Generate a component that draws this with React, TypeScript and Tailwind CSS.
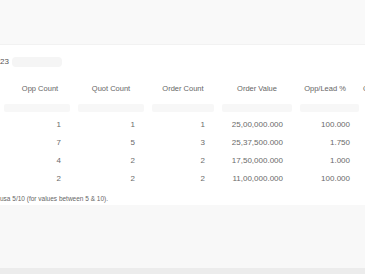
import React from "react";

// Filas de la tabla
const rows = [
  { opp: "1", quot: "1", order: "1", value: "25,00,000.000", pct: "100.000" },
  { opp: "7", quot: "5", order: "3", value: "25,37,500.000", pct: "1.750" },
  { opp: "4", quot: "2", order: "2", value: "17,50,000.000", pct: "1.000" },
  { opp: "2", quot: "2", order: "2", value: "11,00,000.000", pct: "100.000" },
];

const cols = ["w-[74px]", "w-[74px]", "w-[70px]", "w-[78px]", "w-[67px]"];

export default function App() {
  return (
    <div
      className="w-[365px] h-[274px] overflow-hidden bg-[#f8f8f8] flex flex-col text-[#666]"
      style={{ fontFamily: '"Liberation Sans", Arial, sans-serif' }}
    >
      {/* Fondo superior */}
      <div className="h-[45px] shrink-0 bg-[#f9f9f9] border-b border-[#f2f2f2]" />

      {/* Tarjeta */}
      <div className="h-[160px] shrink-0 bg-white flex flex-col">
        <div className="h-[22px] mt-[6px] flex items-center gap-[3px]">
          <span className="text-[8px] leading-none text-[#555]">23</span>
          <div className="w-[50px] h-[10px] bg-[#f5f5f5] rounded-sm" />
        </div>

        {/* Encabezado */}
        <div className="flex items-center h-[22px] mt-[5px] text-[7.5px] whitespace-nowrap">
          <div className={`${cols[0]} shrink-0 text-center pl-[6px]`}>Opp Count</div>
          <div className={`${cols[1]} shrink-0 text-center`}>Quot Count</div>
          <div className={`${cols[2]} shrink-0 text-center`}>Order Count</div>
          <div className={`${cols[3]} shrink-0 text-center`}>Order Value</div>
          <div className={`${cols[4]} shrink-0 text-center pr-[9px]`}>Opp/Lead %</div>
          <div className="shrink-0">Order %</div>
        </div>

        {/* Fila de filtros */}
        <div className="flex items-center h-[9px] mt-[3px]">
          {cols.map((c, i) => (
            <div key={i} className={`${c} shrink-0 px-[4px]`}>
              <div className="h-[8px] bg-[#f7f7f7] rounded-[2px]" />
            </div>
          ))}
        </div>

        {/* Datos */}
        <div className="flex flex-col mt-[4px] text-[8px] text-[#6a6a6a]">
          {rows.map((r, i) => (
            <div key={i} className="flex items-center h-[18px]">
              <div className={`${cols[0]} shrink-0 text-right pr-[13px]`}>{r.opp}</div>
              <div className={`${cols[1]} shrink-0 text-right pr-[13px]`}>{r.quot}</div>
              <div className={`${cols[2]} shrink-0 text-right pr-[13px]`}>{r.order}</div>
              <div className={`${cols[3]} shrink-0 text-right pr-[13px]`}>{r.value}</div>
              <div className={`${cols[4]} shrink-0 text-right pr-[13px]`}>{r.pct}</div>
            </div>
          ))}
        </div>

        <div className="mt-[6px] text-[6.5px] text-[#666] whitespace-nowrap">
          usa 5/10 (for values between 5 &amp; 10).
        </div>
      </div>

      {/* Fondo inferior */}
      <div className="flex-1 bg-[#f8f8f8]" />
      <div className="h-[6px] shrink-0 bg-[#ececec]" />
    </div>
  );
}
